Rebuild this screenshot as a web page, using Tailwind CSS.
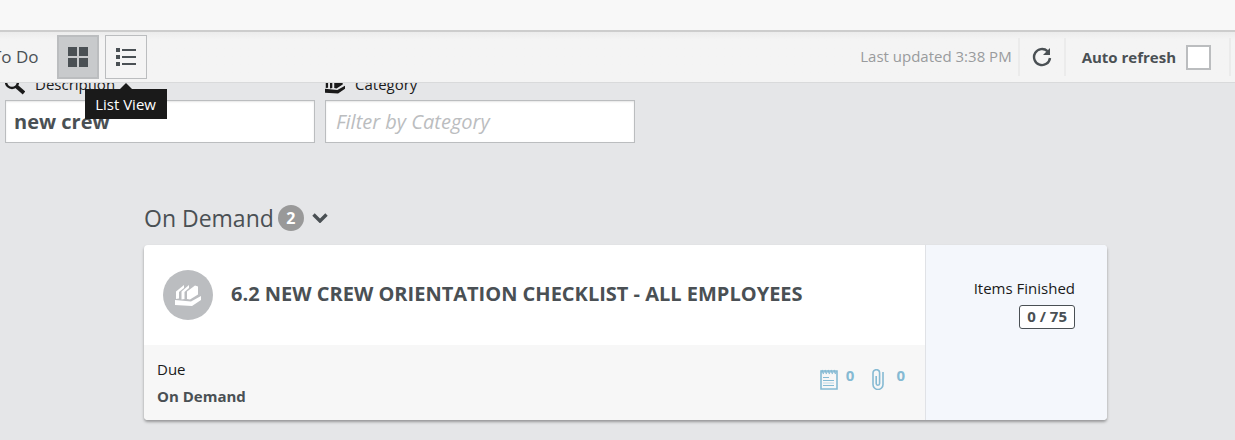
<!DOCTYPE html>
<html lang="en">
<head>
    <meta charset="UTF-8">
    <meta name="viewport" content="width=device-width, initial-scale=1.0">
    <title>To Do</title>
    <script src="https://cdn.jsdelivr.net/npm/@tailwindcss/browser@4"></script>
</head>
<body class="flex h-screen flex-col overflow-hidden bg-[#e5e6e8] font-['Open_Sans','Noto_Sans',sans-serif] text-[15px] text-[#1a1a1a]">
    <!-- Header -->
    <header class="h-8 shrink-0 border-b-2 border-[#cdcdcd] bg-[#f8f8f8]"></header>

    <!-- Toolbar -->
    <div class="relative z-10 flex h-[51px] shrink-0 items-center justify-between border-b border-[#d9dadb] bg-linear-to-b from-[#ececec] to-[#f4f4f4] to-15% text-[#4a5054]">
        <div class="flex items-center">
            <h1 class="-ml-2 mr-[18px] text-[17px]">To Do</h1>
            <button type="button" aria-label="Grid View" class="mr-1.5 flex h-11 w-[42px] items-center justify-center border-2 border-[#bbbdbf] bg-[#c8cacc]">
                <svg class="size-5" viewBox="0 0 20 20" fill="currentColor"><path d="M0 0h9v9H0zM11 0h9v9h-9zM0 11h9v9H0zM11 11h9v9h-9z"/></svg>
            </button>
            <button type="button" aria-describedby="list-tip" aria-label="List View" class="relative flex h-11 w-[42px] items-center justify-center border border-[#bbbdbf] bg-[#f4f4f4]">
                <svg class="h-[18px] w-5" viewBox="0 0 20 18" fill="currentColor"><path d="M0 0h4v4H0zM0 7h4v4H0zM0 14h4v4H0zM6 1h14v2H6zM6 8h14v2H6zM6 15h14v2H6z"/></svg>
                <span id="list-tip" role="tooltip" class="absolute top-[53px] left-1/2 flex h-[30px] w-[82px] -translate-x-1/2 items-center justify-center bg-[#1a1a1a] text-[15px] whitespace-nowrap text-white">
                    List View
                    <svg class="absolute -top-1.5 left-1/2 h-1.5 w-3 -translate-x-1/2" viewBox="0 0 12 6" fill="#1a1a1a"><path d="M6 0l6 6H0z"/></svg>
                </span>
            </button>
        </div>
        <div class="flex items-center pr-1">
            <span class="mr-1.5 pb-0.5 text-[15px] text-[#999b9d]">Last updated 3:38 PM</span>
            <button type="button" aria-label="Refresh" class="flex h-[38px] w-12 items-center justify-center border-x-2 border-[#ebebeb]">
                <svg class="size-5" viewBox="0 0 20 20" fill="none"><path d="M15.500 4.200A8 8 0 1 0 18 11" stroke="currentColor" stroke-width="2.400"/><path d="M18 1v7h-7z" fill="currentColor"/></svg>
            </button>
            <div class="flex h-[38px] items-center border-r-2 border-[#ebebeb] pr-[18px] pl-4">
                <label for="auto" class="mr-2.5 text-[15px] font-bold">Auto refresh</label>
                <input id="auto" type="checkbox" class="size-[25px] appearance-none border-2 border-[#bbbdbf] bg-white">
            </div>
        </div>
    </div>

    <main class="min-h-0 flex-1 overflow-hidden">
        <!-- Filters -->
        <form class="-mt-[11px] flex gap-2.5 pl-[5px]">
            <div class="w-[310px]">
                <label for="desc" class="mb-[3px] flex h-[25px] items-center">
                    <svg class="mr-2.5 size-5" viewBox="0 0 20 20" fill="none" stroke="currentColor"><circle cx="7" cy="7" r="6" stroke-width="2.400"/><path d="M11 11l8 7" stroke-width="3.800"/></svg>
                    Description
                </label>
                <input id="desc" type="text" value="new crew" class="h-[43px] w-full border border-[#bbbdbf] bg-white px-2 text-xl font-bold text-[#4a5054] shadow-[inset_0_1px_2px_#0000001a]">
            </div>
            <div class="w-[310px]">
                <label for="cat" class="mb-[3px] flex h-[25px] items-center">
                    <svg class="mr-2.5 h-[18px] w-5" viewBox="0 0 26 22" fill="currentColor"><path d="M1 15V7.500L9 1v3L4 8v6.500zM6.500 15.500V7.500L14 1v3L9.500 8v7zM12 15V7.500L20 1.500l3 1v8L15 15.500z"/><path d="M0 16l16 1.500 10-5.500v4l-9 6-17-1z"/></svg>
                    Category
                </label>
                <input id="cat" type="text" placeholder="Filter by Category" class="h-[43px] w-full border border-[#bbbdbf] bg-white px-2.5 text-xl shadow-[inset_0_1px_2px_#0000001a] placeholder:text-[#bbbdbf] placeholder:italic">
            </div>
        </form>

        <!-- On Demand tasks -->
        <section class="mt-[57px] mr-32 ml-36">
            <div class="flex h-9 items-center text-[#4a5054]">
                <h2 class="text-[23px]">On Demand</h2>
                <span class="ml-1 flex size-[26px] items-center justify-center rounded-full bg-[#999] text-base font-bold text-white">2</span>
                <button type="button" aria-label="Collapse" class="ml-2">
                    <svg class="h-2.5 w-4" viewBox="0 0 16 10" fill="none"><path d="M1.500 1.500L8 8l6.500-6.500" stroke="currentColor" stroke-width="3.400"/></svg>
                </button>
            </div>

            <article class="mt-[9px] flex rounded bg-white shadow-[0_2px_3px_#00000059]">
                <div class="flex-1">
                    <div class="flex h-[100px] items-center pl-[19px]">
                        <span class="mr-[18px] flex size-[50px] items-center justify-center rounded-full bg-[#bbbdc0] text-white">
                            <svg class="h-[22px] w-[26px]" viewBox="0 0 26 22" fill="currentColor"><path d="M1 15V7.500L9 1v3L4 8v6.500zM6.500 15.500V7.500L14 1v3L9.500 8v7zM12 15V7.500L20 1.500l3 1v8L15 15.500z"/><path d="M0 16l16 1.500 10-5.500v4l-9 6-17-1z"/></svg>
                        </span>
                        <h3 class="pb-0.5 text-xl font-bold text-[#4a5054]">6.2 NEW CREW ORIENTATION CHECKLIST - ALL EMPLOYEES</h3>
                    </div>
                    <div class="flex h-[75px] items-start justify-between rounded-bl bg-[#f7f7f7] pr-5 pl-[13px]">
                        <dl class="pt-[11px] leading-[27px]">
                            <dt>Due</dt>
                            <dd class="font-bold text-[#4a5054]">On Demand</dd>
                        </dl>
                        <div class="flex items-start gap-[18px] pt-5 font-bold text-[#85bad3]">
                            <span class="flex gap-2 leading-5">
                                <svg class="mt-1 h-[21px] w-[18px]" viewBox="0 0 18 21" fill="none" stroke="currentColor"><path d="M1 2v18h16V2z" stroke-width="1.600"/><path d="M3 8.500h6M3 11.500h11M3 16.500h11" stroke-width="1"/><path d="M3 14h11" stroke-width=".5"/><path d="M2 1l1.500 4M5 1l1.500 4M8 1l1.500 4M11 1l1.500 4M14 1l1.500 4M1 3h16" stroke-width="1.200"/></svg>
                                0
                            </span>
                            <span class="flex gap-3 leading-5">
                                <svg class="mt-1 h-[21px] w-3" viewBox="0 0 12 21" fill="none" stroke="currentColor" stroke-width="1.600"><path d="M11 3v12.500a5 5 0 0 1-10 0V4a3.300 3.300 0 0 1 6.600 0v10.500a1.700 1.700 0 0 1-3.400 0V7"/></svg>
                                0
                            </span>
                        </div>
                    </div>
                </div>
                <div class="flex w-[182px] flex-col items-end rounded-r border-l border-[#e0e2e6] bg-[#f4f7fc] pt-[31px] pr-8">
                    <span class="leading-6">Items Finished</span>
                    <span class="mt-[5px] flex h-6 items-center rounded-[3px] border border-[#4a5054] bg-white px-[7px] pb-0.5 font-bold text-[#4a5054]">0 / 75</span>
                </div>
            </article>
        </section>
    </main>
</body>
</html>
